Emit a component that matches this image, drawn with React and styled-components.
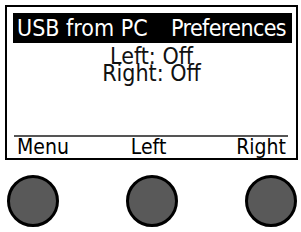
import styled, { createGlobalStyle } from "styled-components";

const Global = createGlobalStyle`
    body {
        margin: 0;
        background: #fff;
        font-family: "DejaVu Sans", Tahoma, sans-serif;
        font-stretch: condensed;
    }
`
const Panel = styled.div`
    width: 301px;
    height: 232px;
    display: flex;
    flex-direction: column;
`
const Screen = styled.div`
    margin: 5px 3px 0 5px;
    height: 155px;
    box-sizing: border-box;
    border: 2px solid #000;
    padding: 6px 6px 0 6px;
    display: flex;
    flex-direction: column;
`
const Header = styled.div`
    background: #000;
    color: #fff;
    height: 30px;
    display: flex;
    justify-content: space-between;
    align-items: center;
    padding: 0 6px 0 4px;
    font-size: 23px;
    line-height: 30px;
    margin-right: -2px;
`
const Title = styled.span`
    letter-spacing: ${p => p.$tight ? "-0.6px" : "0"};
`
const Values = styled.div`
    flex: 1;
    text-align: center;
    font-size: 23px;
    padding-top: 4px;
    color: #111;
`
const Line = styled.div`
    height: 17px;
    line-height: 18px;
`
const SoftKeys = styled.div`
    border-top: 2px solid #555;
    display: flex;
    justify-content: space-between;
    font-size: 21px;
    line-height: 21px;
    padding: 0 2px 0 3px;
    margin: 0 2px 0 1px;
`
const Key = styled.span`
    margin-right: ${p => p.$shift || 0}px;
`
const Knobs = styled.div`
    display: flex;
    justify-content: space-between;
    padding: 15px 4px 0 7px;
`
const Knob = styled.div`
    width: 52px;
    height: 52px;
    box-sizing: border-box;
    border-radius: 50%;
    border: 3px solid #000;
    background: #595959;
`

export default function App() {
    return (
        <Panel>
            <Global />
            <Screen>
                <Header>
                    <Title>USB from PC</Title>
                    <Title $tight>Preferences</Title>
                </Header>
                <Values>
                    <Line>Left: Off</Line>
                    <Line>Right: Off</Line>
                </Values>
                <SoftKeys>
                    <Key>Menu</Key>
                    <Key $shift={8}>Left</Key>
                    <Key>Right</Key>
                </SoftKeys>
            </Screen>
            <Knobs>
                <Knob />
                <Knob />
                <Knob />
            </Knobs>
        </Panel>
    )
}
